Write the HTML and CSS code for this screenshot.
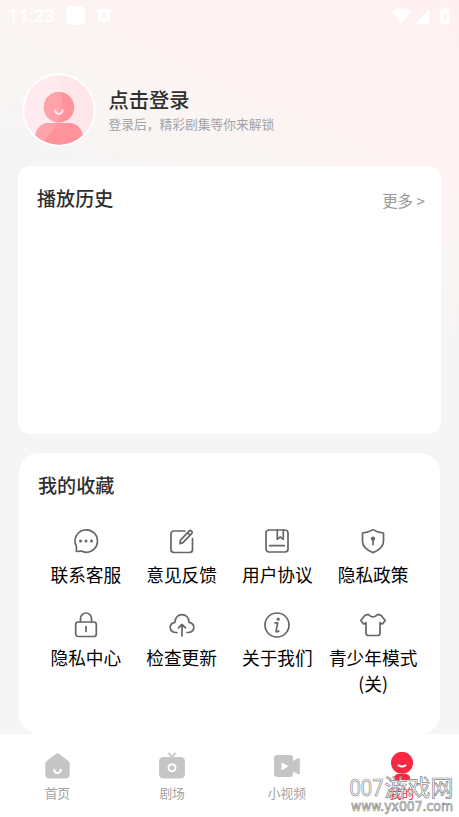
FILE: index.html
```html
<!DOCTYPE html>
<html lang="zh-CN">
<head>
<meta charset="utf-8">
<title>我的</title>
<link rel="stylesheet" href="styles.css">
</head>
<body>
<div class="app">
  <div class="status">
    <span class="clock">11:23</span>
    <span class="pill"></span>
    <svg class="input-mark" width="12" height="13" viewBox="0 0 12 13"><rect width="12" height="13" rx="1.5" fill="#fff"/><path d="M3.3 9.5 6 3.2l2.7 6.3M4.2 7.5h3.6" fill="none" stroke="#fdeff0" stroke-width="1.2"/></svg>
    <svg class="signals" width="60" height="18" viewBox="0 0 60 18" fill="#fff"><path d="M0 4.2Q9.5-1.8 19 4.2L9.5 17z"/><path d="M37.500 2v15H23z"/><path d="M49 2.500h2.500V.5h4v2H57q.8 0 .8.8V16q0 1-1 1h-8q-1 0-1-1V3.300q0-.8 1.200-.8z"/><path d="M53.600 5.500 50.500 11h2v3.500L55.500 9h-2z" fill="#fdeff0"/></svg>
  </div>

  <header class="profile">
    <svg class="avatar" width="74" height="74" viewBox="0 0 74 74">
      <defs>
        <clipPath id="disc"><circle cx="37" cy="37" r="34.700"/></clipPath>
        <clipPath id="shine"><path d="M0 0H30Q41 14 40 32 38 54 16 74H0z"/></clipPath>
      </defs>
      <circle cx="37" cy="37" r="36.700" fill="#fff"/>
      <circle cx="37" cy="37" r="34.700" fill="#ffe6eb"/>
      <g clip-path="url(#disc)">
        <circle cx="37" cy="37" r="35" fill="#ffebef" clip-path="url(#shine)"/>
        <g fill="#ff929b"><circle cx="37" cy="34.300" r="15.200"/><path d="M12 74q0-24 15-24h20q15 0 15 24z"/></g>
        <g fill="#ffa2aa" clip-path="url(#shine)"><circle cx="37" cy="34.300" r="15.200"/><path d="M12 74q0-24 15-24h20q15 0 15 24z"/></g>
      </g>
      <path d="M33.200 37.300a3.700 3.700 0 0 0 7.400 0" fill="none" stroke="#ffebef" stroke-width="2" stroke-linecap="round"/>
    </svg>
    <div class="login">
      <h1>点击登录</h1>
      <p>登录后，精彩剧集等你来解锁</p>
    </div>
  </header>

  <section class="card history">
    <h2>播放历史</h2>
    <span class="more">更多 &gt;</span>
  </section>

  <section class="card favorites">
    <h2>我的收藏</h2>
    <div class="grid">
      <div class="item"><svg viewBox="0 0 26 26"><path d="M3.400 23.500V18.400A11.200 11.200 0 1 1 8.300 23.100Z"/><g class="solid"><circle cx="7.500" cy="13" r="1.500"/><circle cx="13" cy="13" r="1.500"/><circle cx="18.500" cy="13" r="1.500"/></g></svg><span>联系客服</span></div>
      <div class="item"><svg viewBox="0 0 26 26"><path d="M16 3H5Q2 3 2 6v15.500q0 3 3 3h15.500q3 0 3-3V10.500M11.500 12.200 20 3.100q1.200-1.200 2.500 0t.1 2.600L14 14.600l-3 1.100zM18.700 4.800l2.500 2.400"/></svg><span>意见反馈</span></div>
      <div class="item"><svg viewBox="0 0 26 26"><rect x="2" y="2" width="22" height="22" rx="3"/><path d="M13.300 2v9.300l3-2.500 3 2.500V2M5.800 17.700h14.500"/></svg><span>用户协议</span></div>
      <div class="item"><svg viewBox="0 0 26 26"><path d="M13 1.600Q17.500 4.500 23.500 5v8.300Q23.500 20.500 13 24.600 2.500 20.500 2.500 13.300V5Q8.500 4.500 13 1.600zM13 11v5.600"/><circle class="solid" cx="13" cy="10.700" r="2.100"/></svg><span>隐私政策</span></div>
      <div class="item"><svg viewBox="0 0 26 26"><rect x="2.700" y="10" width="20.600" height="14.500" rx="2.500"/><path d="M7.500 10V6.500a5.500 5.500 0 0 1 11 0V10M13 14.500v5"/></svg><span>隐私中心</span></div>
      <div class="item"><svg viewBox="0 0 26 26"><path d="M8 20.500H6.500C-.5 19.500-.5 11.500 6 10.300 6 0 20 0 20 10.300c6.500 1.200 6.500 9.200-.5 10.200H18M13 24v-11M9.500 15.900l3.500-3.600 3.500 3.600"/></svg><span>检查更新</span></div>
      <div class="item"><svg viewBox="0 0 26 26"><circle cx="13" cy="13" r="12"/><path d="M11 10.800h2.700l-1.600 8q-.2 1 .6 1 1 0 2-.8"/><circle class="solid" cx="14.200" cy="7.200" r="1.600"/></svg><span>关于我们</span></div>
      <div class="item"><svg viewBox="0 0 26 26"><path d="M8.200 2.400q4.800 5 9.600 0l3.400 1 4 5.100-2.700 3.500-2.500-1.300V21q0 2.500-2.500 2.500h-9Q6 23.500 6 21V10.700L3.500 12 .8 8.500l4-5.100z"/></svg><span>青少年模式<br>(关)</span></div>
    </div>
  </section>

  <nav class="tabs">
    <div class="tab"><svg width="28" height="28" viewBox="0 0 28 28"><path d="M12.500 2.200q2-1.700 4 0l8.300 6.200q1.900 1.500 1.900 3.800v10.300q0 4-4 4H6.300q-4 0-4-4V12.200q0-2.300 1.900-3.800z" fill="#c5c5c5"/><path d="M11.200 17.700a3.300 3.300 0 0 0 6.600 0" class="smile"/></svg><span>首页</span></div>
    <div class="tab"><svg width="28" height="28" viewBox="0 0 28 28"><path d="m10.500.8 3.500 4.500L17.500.8" fill="none" stroke="#c5c5c5" stroke-width="1.800"/><rect x="1" y="5" width="26" height="21.500" rx="4.500" fill="#c5c5c5"/><circle cx="14" cy="15.800" r="3.500" class="smile"/></svg><span>剧场</span></div>
    <div class="tab"><svg width="28" height="28" viewBox="0 0 28 28"><path d="M4.500 3H17q3 0 3 3v3l5-2.700q1.800-.8 1.800 1V21q0 2-1.800 1L20 19.400V22q0 3-3 3H4.500q-3.500 0-3.500-3V6q0-3 3.500-3z" fill="#c5c5c5"/><path d="M8.500 10.200v8l7-4z" fill="#fff"/></svg><span>小视频</span></div>
    <div class="tab active"><svg width="28" height="28" viewBox="0 0 28 28"><circle cx="14" cy="10.800" r="11" fill="#fc2645"/><path d="M6 28v-2q0-3 3.500-4h9q3.500 1 3.500 4v2z" fill="#fc2645"/><path d="M10.500 13.300q3.500 2.600 7 0" class="smile"/></svg><span>我的</span></div>
  </nav>

  <div class="watermark">
    <svg width="110" height="44" viewBox="0 0 110 44">
      <text y="23" font-size="23"><tspan x="1.500" class="digits" textLength="34" lengthAdjust="spacingAndGlyphs">007</tspan><tspan x="36.500">游戏网</tspan></text>
      <text class="url" x="3" y="38" font-size="13.500" textLength="102" lengthAdjust="spacingAndGlyphs">www.yx007.com</text>
    </svg>
  </div>
</div>
</body>
</html>
```
FILE: styles.css
```css
* { box-sizing: border-box; }

body {
  margin: 0;
  font-family: "Noto Sans CJK SC", sans-serif;
  color: #000;
}

.app {
  position: relative;
  display: flex;
  flex-direction: column;
  width: 459px;
  height: 817px;
  overflow: hidden;
  background: linear-gradient(205deg, #fff1f1 0, #fff2f2 130px, #faf5f3 225px, #f5f5f5 330px);
}

.status {
  display: flex;
  align-items: center;
  height: 31px;
  padding: 0 7px 0 8px;
  color: #fff;
}

.clock {
  width: 58px;
  font: 500 18.300px/31px Roboto, sans-serif;
}

.pill {
  width: 19px;
  height: 19px;
  border-radius: 5px;
  background: #fff;
}

.input-mark { margin-left: 13px; }
.signals { margin-left: auto; }

.profile {
  display: flex;
  height: 135px;
  padding: 41.500px 0 0 21.500px;
}

.avatar { flex: none; }

.login { padding: 12.500px 0 0 13px; }

h1, h2, p { margin: 0; }

h1 {
  font-size: 20.300px;
  line-height: 29px;
  font-weight: 500;
  color: #303030;
}

.login p {
  font-size: 12.750px;
  line-height: 20px;
  color: #a3a3a3;
}

.card { background: #fff; }

h2 {
  font-size: 19.100px;
  line-height: 28px;
  font-weight: 500;
  color: #303030;
}

.history {
  display: flex;
  justify-content: space-between;
  height: 268px;
  margin: 0 18px;
  padding: 18px 16px 0 19px;
  border-radius: 13px;
}

.more {
  padding-top: 4px;
  font-size: 15.400px;
  line-height: 24px;
  color: #999;
}

.favorites {
  height: 281px;
  margin: 19px 19px 0;
  padding: 18px 19px 0;
  border-radius: 20px;
}

.grid {
  display: grid;
  grid-template-columns: repeat(4, 1fr);
  grid-auto-rows: 83.500px;
  padding-top: 29px;
}

.item {
  display: flex;
  flex-direction: column;
  align-items: center;
  text-align: center;
  font-size: 17.700px;
  line-height: 26px;
  white-space: nowrap;
}

.item svg {
  flex: none;
  width: 26px;
  height: 26px;
  margin-bottom: 6.500px;
  fill: none;
  stroke: #666;
  stroke-width: 1.700;
  stroke-linejoin: round;
  stroke-linecap: round;
}

.item .solid { fill: #666; stroke: none; }

.tabs {
  display: grid;
  grid-template-columns: repeat(4, 1fr);
  height: 83px;
  background: #fff;
}

.tab {
  display: flex;
  flex-direction: column;
  align-items: center;
  padding-top: 18px;
  font-size: 12.750px;
  line-height: 20px;
  color: #a3a3a3;
}

.tab span { margin-top: 3px; }
.active { color: #fc2645; }

.smile {
  fill: none;
  stroke: #fff;
  stroke-width: 2;
  stroke-linecap: round;
}

.watermark {
  position: absolute;
  right: 1px;
  bottom: 0;
  height: 44px;
}

.watermark text {
  font-weight: 400;
  fill: #fff;
  fill-opacity: .65;
  stroke: #858585;
  stroke-width: .7px;
}

.watermark .digits { font-family: "Noto Sans", sans-serif; }
.watermark .url { font-family: "DejaVu Sans", sans-serif; }
```
